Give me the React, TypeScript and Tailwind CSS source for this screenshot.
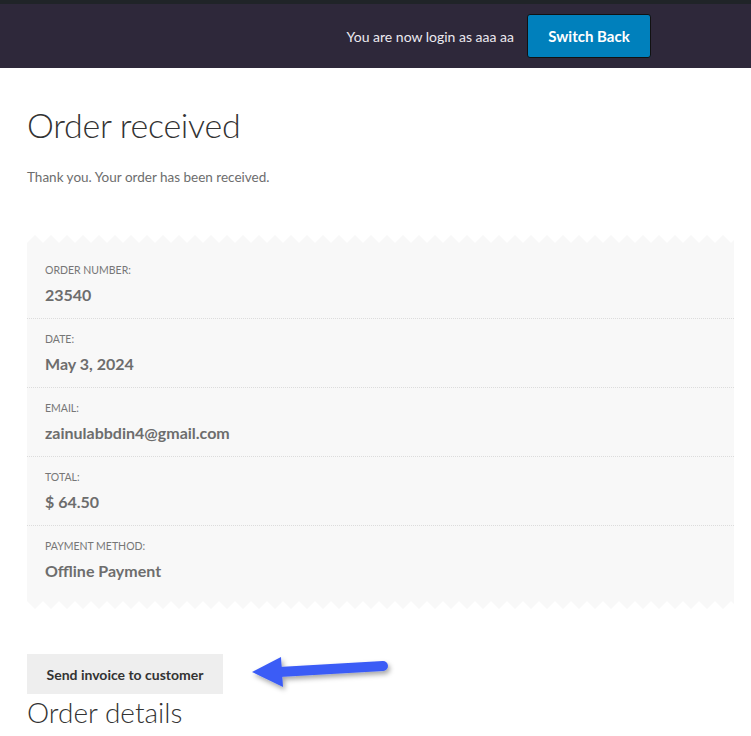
import React from "react";

const font = { fontFamily: "Lato, 'Open Sans', sans-serif" };

const rows = [
  { label: "ORDER NUMBER:", value: "23540" },
  { label: "DATE:", value: "May 3, 2024" },
  { label: "EMAIL:", value: "zainulabbdin4@gmail.com" },
  { label: "TOTAL:", value: "$ 64.50" },
  { label: "PAYMENT METHOD:", value: "Offline Payment" },
];

// zigzag edge of the receipt panel
const Zigzag = ({ flip }: { flip?: boolean }) => (
  <svg className="block w-full h-[8px]" preserveAspectRatio="none">
    <defs>
      <pattern id={flip ? "zz-b" : "zz-t"} width="16" height="8" patternUnits="userSpaceOnUse">
        <polygon points={flip ? "0,0 8,8 16,0" : "0,8 8,0 16,8"} fill="#f8f8f8" />
      </pattern>
    </defs>
    <rect width="100%" height="8" fill={`url(#${flip ? "zz-b" : "zz-t"})`} />
  </svg>
);

const Arrow = () => (
  <svg
    className="absolute left-[240px] top-[648px] pointer-events-none"
    width="160"
    height="50"
    viewBox="240 648 160 50"
  >
    <defs>
      <filter id="sh" x="-20%" y="-40%" width="140%" height="180%">
        <feDropShadow dx="2" dy="3" stdDeviation="2.5" floodColor="#000" floodOpacity="0.35" />
      </filter>
    </defs>
    <g filter="url(#sh)">
      <line x1="279" y1="672" x2="383" y2="666" stroke="#3b5cf6" strokeWidth="10" strokeLinecap="round" />
      <polygon points="252,672 281,657 283,687" fill="#3b5cf6" />
    </g>
  </svg>
);

export default function App() {
  return (
    <div className="relative min-h-[736px] bg-white" style={font}>
      {/* admin switch bar */}
      <div className="border-t-4 border-[#202428] bg-[#2e283a] h-[68px] flex items-center justify-end pr-[100px]">
        <span className="text-[14px] text-[#eceaf0] mr-[13px]">You are now login as aaa aa</span>
        <button className="h-[44px] w-[124px] rounded-[3px] border border-[#111] bg-[#0080bc] text-white text-[15px] font-bold">
          Switch Back
        </button>
      </div>

      <div className="px-[27px]">
        <h1 className="mt-[34px] text-[34px] font-light text-[#333] leading-[46px] tracking-[-0.3px]">Order received</h1>
        <p className="mt-[19px] text-[13.5px] text-[#6d6d6d] leading-[20px]">Thank you. Your order has been received.</p>

        <div className="mt-[48px] w-[707px]">
          <Zigzag />
          <ul className="bg-[#f8f8f8] py-[7px]">
            {rows.map((r, i) => (
              <li
                key={r.label}
                className={`px-[18px] pt-[12px] pb-[11px] ${i < rows.length - 1 ? "border-b border-dotted border-[#dcdcdc]" : ""}`}
              >
                <div className="text-[10.5px] leading-[16px] text-[#767676]">{r.label}</div>
                <div className="mt-[5px] text-[16px] leading-[24px] font-bold text-[#6d6d6d]">{r.value}</div>
              </li>
            ))}
          </ul>
          <Zigzag flip />
        </div>

        <button className="mt-[45px] h-[40px] w-[196px] bg-[#eeeeee] text-[14px] font-bold text-[#333]">
          Send invoice to customer
        </button>
        <h2 className="text-[28px] font-light text-[#333] leading-[36px]">Order details</h2>
      </div>

      <Arrow />
    </div>
  );
}
